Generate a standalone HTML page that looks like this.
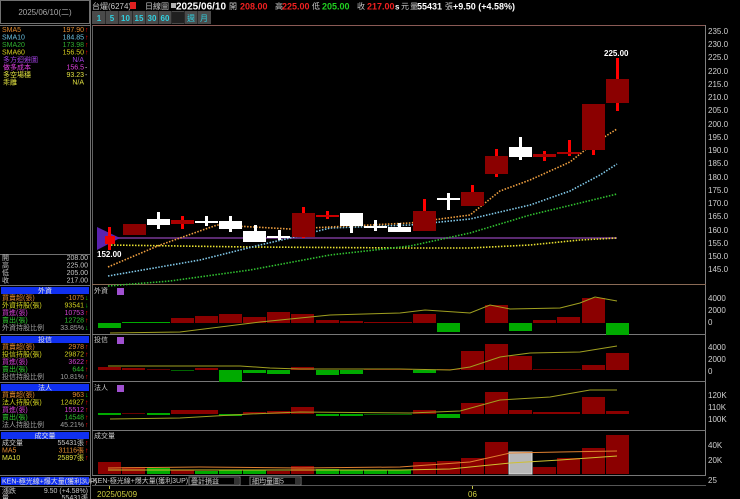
<!DOCTYPE html>
<html><head><meta charset="utf-8"><style>
html,body{margin:0;padding:0;background:#000;width:740px;height:499px;overflow:hidden}
svg{display:block;font-family:"Liberation Sans","Noto Sans CJK TC",sans-serif}
.s{font-size:7px}
</style></head><body>
<svg width="740" height="499" viewBox="0 0 740 499" xmlns="http://www.w3.org/2000/svg">
<rect width="740" height="499" fill="#000"/>
<!-- Left panel frame -->
<rect x="0.5" y="0.5" width="89" height="23" fill="#000" stroke="#707070"/>
<text x="45" y="15" fill="#a8a8a8" font-size="8" text-anchor="middle">2025/06/10(二)</text>
<line x1="90.5" y1="0" x2="90.5" y2="499" stroke="#707070"/>
<line x1="0" y1="25.5" x2="90" y2="25.5" stroke="#707070"/>
<g class="s">
<text x="2" y="32" fill="#e08a30">SMA5</text><text x="84" y="32" fill="#e08a30" text-anchor="end">197.90</text><text x="85" y="32" fill="#f00">↑</text>
<text x="2" y="39.5" fill="#6ac0e0">SMA10</text><text x="84" y="39.5" fill="#6ac0e0" text-anchor="end">184.85</text><text x="85" y="39.5" fill="#f00">↑</text>
<text x="2" y="47" fill="#30b030">SMA20</text><text x="84" y="47" fill="#30b030" text-anchor="end">173.98</text><text x="85" y="47" fill="#f00">↑</text>
<text x="2" y="54.5" fill="#d8d020">SMA60</text><text x="84" y="54.5" fill="#d8d020" text-anchor="end">156.50</text><text x="85" y="54.5" fill="#f00">↑</text>
<text x="3" y="62" fill="#a040e0">多方迴避圖</text><text x="84" y="62" fill="#a040e0" text-anchor="end">N/A</text>
<text x="3" y="69.5" fill="#e040e0">做多成本</text><text x="84" y="69.5" fill="#e040e0" text-anchor="end">156.5</text><text x="85" y="69.5" fill="#ccc">-</text>
<text x="3" y="77" fill="#e0e040">多空場穩</text><text x="84" y="77" fill="#e0e040" text-anchor="end">93.23</text><text x="85" y="77" fill="#ccc">-</text>
<text x="3" y="84.5" fill="#e0e040">乖離</text><text x="84" y="84.5" fill="#e0e040" text-anchor="end">N/A</text>
</g>
<line x1="0" y1="254.5" x2="90" y2="254.5" stroke="#707070"/>
<g class="s" fill="#c8c8c8">
<text x="2" y="260">開</text><text x="88" y="260" text-anchor="end">208.00</text>
<text x="2" y="267.5">高</text><text x="88" y="267.5" text-anchor="end">225.00</text>
<text x="2" y="275">低</text><text x="88" y="275" text-anchor="end">205.00</text>
<text x="2" y="282.5">收</text><text x="88" y="282.5" text-anchor="end">217.00</text>
</g>
<!-- section headers -->
<g class="s">
<line x1="0" y1="285.5" x2="90" y2="285.5" stroke="#707070"/>
<rect x="1" y="287" width="88" height="7" fill="#1030f0"/><text x="45" y="293" fill="#e0e0e0" text-anchor="middle">外資</text>
<text x="2" y="300" fill="#e08a30">買賣超(張)</text><text x="84" y="300" fill="#e08a30" text-anchor="end">-1075</text><text x="85" y="300" fill="#0c0">↓</text>
<text x="2" y="307.5" fill="#d0d020">外資持股(張)</text><text x="84" y="307.5" fill="#d0d020" text-anchor="end">93541</text><text x="85" y="307.5" fill="#0c0">↓</text>
<text x="2" y="315" fill="#d040d0">買進(張)</text><text x="84" y="315" fill="#d040d0" text-anchor="end">10753</text><text x="85" y="315" fill="#f00">↑</text>
<text x="2" y="322.5" fill="#30c030">賣出(張)</text><text x="84" y="322.5" fill="#30c030" text-anchor="end">12728</text><text x="85" y="322.5" fill="#f00">↑</text>
<text x="2" y="330" fill="#a0a0a0">外資持股比例</text><text x="84" y="330" fill="#a0a0a0" text-anchor="end">33.85%</text><text x="85" y="330" fill="#0c0">↓</text>
<line x1="0" y1="334.5" x2="90" y2="334.5" stroke="#707070"/>
<rect x="1" y="336" width="88" height="7" fill="#1030f0"/><text x="45" y="342" fill="#e0e0e0" text-anchor="middle">投信</text>
<text x="2" y="349" fill="#e08a30">買賣超(張)</text><text x="84" y="349" fill="#e08a30" text-anchor="end">2978</text><text x="85" y="349" fill="#f00">↑</text>
<text x="2" y="356.5" fill="#d0d020">投信持股(張)</text><text x="84" y="356.5" fill="#d0d020" text-anchor="end">29872</text><text x="85" y="356.5" fill="#f00">↑</text>
<text x="2" y="364" fill="#d040d0">買進(張)</text><text x="84" y="364" fill="#d040d0" text-anchor="end">3622</text><text x="85" y="364" fill="#f00">↑</text>
<text x="2" y="371.5" fill="#30c030">賣出(張)</text><text x="84" y="371.5" fill="#30c030" text-anchor="end">644</text><text x="85" y="371.5" fill="#f00">↑</text>
<text x="2" y="379" fill="#a0a0a0">投信持股比例</text><text x="84" y="379" fill="#a0a0a0" text-anchor="end">10.81%</text><text x="85" y="379" fill="#f00">↑</text>
<line x1="0" y1="382.5" x2="90" y2="382.5" stroke="#707070"/>
<rect x="1" y="384" width="88" height="7" fill="#1030f0"/><text x="45" y="390" fill="#e0e0e0" text-anchor="middle">法人</text>
<text x="2" y="397" fill="#e08a30">買賣超(張)</text><text x="84" y="397" fill="#e08a30" text-anchor="end">963</text><text x="85" y="397" fill="#0c0">↓</text>
<text x="2" y="404.5" fill="#d0d020">法人持股(張)</text><text x="84" y="404.5" fill="#d0d020" text-anchor="end">124927</text><text x="85" y="404.5" fill="#f00">↑</text>
<text x="2" y="412" fill="#d040d0">買進(張)</text><text x="84" y="412" fill="#d040d0" text-anchor="end">15512</text><text x="85" y="412" fill="#f00">↑</text>
<text x="2" y="419.5" fill="#30c030">賣出(張)</text><text x="84" y="419.5" fill="#30c030" text-anchor="end">14548</text><text x="85" y="419.5" fill="#f00">↑</text>
<text x="2" y="427" fill="#a0a0a0">法人持股比例</text><text x="84" y="427" fill="#a0a0a0" text-anchor="end">45.21%</text><text x="85" y="427" fill="#f00">↑</text>
<line x1="0" y1="430.5" x2="90" y2="430.5" stroke="#707070"/>
<rect x="1" y="432" width="88" height="7" fill="#1030f0"/><text x="45" y="438" fill="#e0e0e0" text-anchor="middle">成交量</text>
<text x="2" y="445" fill="#c8c8c8">成交量</text><text x="84" y="445" fill="#c8c8c8" text-anchor="end">55431張</text><text x="85" y="445" fill="#f00">↑</text>
<text x="2" y="452.5" fill="#e08a30">MA5</text><text x="84" y="452.5" fill="#e08a30" text-anchor="end">31116張</text><text x="85" y="452.5" fill="#f00">↑</text>
<text x="2" y="460" fill="#e0e040">MA10</text><text x="84" y="460" fill="#e0e040" text-anchor="end">25897張</text><text x="85" y="460" fill="#f00">↑</text>
<line x1="0" y1="475.5" x2="90" y2="475.5" stroke="#707070"/>
<rect x="1" y="477" width="88" height="8" fill="#1030f0"/><text x="2" y="483.5" fill="#e0e0e0">KEN-極光線+爆大量(獲利3UP)</text>
<line x1="0" y1="486.5" x2="90" y2="486.5" stroke="#707070"/>
<text x="2" y="493" fill="#c8c8c8">漲跌</text><text x="88" y="493" fill="#c8c8c8" text-anchor="end">9.50 (+4.58%)</text>
<text x="2" y="500" fill="#c8c8c8">量</text><text x="88" y="500" fill="#c8c8c8" text-anchor="end">55431張</text>
</g>

<!-- Top header -->
<g font-size="8" fill="#c8c8c8">
<text x="92" y="9">台燿(6274)</text>
<rect x="130" y="2" width="6" height="7" fill="#e02020"/>
<text x="145" y="9">日線圖</text>
<rect x="171" y="3" width="5" height="5" fill="#b0b0b0"/>
<text x="176" y="9.5" font-size="10" font-weight="bold" fill="#fff">2025/06/10</text>
<text x="229" y="9">開</text><text x="240" y="9.5" font-size="9" font-weight="bold" fill="#f02020">208.00</text>
<text x="275" y="9">高</text><text x="282" y="9.5" font-size="9" font-weight="bold" fill="#f02020">225.00</text>
<text x="312" y="9">低</text><text x="322" y="9.5" font-size="9" font-weight="bold" fill="#20d020">205.00</text>
<text x="357" y="9">收</text><text x="367" y="9.5" font-size="9" font-weight="bold" fill="#f02020">217.00</text>
<text x="395" y="9.5" font-size="8" font-weight="bold" fill="#fff">s</text><text x="401" y="9">元</text>
<text x="410" y="9">量</text><text x="417" y="9.5" font-size="9" font-weight="bold" fill="#fff">55431</text>
<text x="445" y="9">張</text><text x="453" y="9.5" font-size="9" font-weight="bold" fill="#fff">+9.50 (+4.58%)</text>
</g>
<!-- buttons -->
<g font-size="8" font-weight="bold" fill="#30d0e0" text-anchor="middle">
<rect x="92" y="11" width="119" height="13" fill="#4a4a4a"/>
<rect x="172" y="12" width="12" height="11" fill="#202020"/>
<g stroke="#2a2a2a"><line x1="105.5" y1="11" x2="105.5" y2="24"/><line x1="118.5" y1="11" x2="118.5" y2="24"/><line x1="132.5" y1="11" x2="132.5" y2="24"/><line x1="145.5" y1="11" x2="145.5" y2="24"/><line x1="158.5" y1="11" x2="158.5" y2="24"/><line x1="171.5" y1="11" x2="171.5" y2="24"/><line x1="184.5" y1="11" x2="184.5" y2="24"/><line x1="197.5" y1="11" x2="197.5" y2="24"/></g>
<text x="99" y="21">1</text><text x="112" y="21">5</text><text x="125.5" y="21">10</text><text x="139" y="21">15</text><text x="152" y="21">30</text><text x="165" y="21">60</text>
<text x="191" y="21" font-weight="normal">週</text><text x="204" y="21" font-weight="normal">月</text>
</g>

<!-- chart frame -->
<line x1="92" y1="25.5" x2="706" y2="25.5" stroke="#8a5a55"/>
<line x1="92.5" y1="25" x2="92.5" y2="476" stroke="#606060"/>
<line x1="705.5" y1="25" x2="705.5" y2="476" stroke="#808080"/>
<g stroke="#777">
<line x1="92" y1="284.5" x2="706" y2="284.5" stroke="#8a6a55"/>
<line x1="92" y1="334.5" x2="706" y2="334.5"/>
<line x1="92" y1="381.5" x2="706" y2="381.5"/>
<line x1="92" y1="430.5" x2="706" y2="430.5"/>
<line x1="92" y1="475.5" x2="706" y2="475.5"/>
<line x1="92" y1="485.5" x2="706" y2="485.5" stroke="#555"/>
</g>
<!-- price axis -->
<g font-size="8" fill="#d0d0d0">
<text x="708" y="34">235.0</text><text x="708" y="47">230.0</text><text x="708" y="60">225.0</text><text x="708" y="74">220.0</text><text x="708" y="87">215.0</text><text x="708" y="100">210.0</text><text x="708" y="113">205.0</text><text x="708" y="127">200.0</text><text x="708" y="140">195.0</text><text x="708" y="153">190.0</text><text x="708" y="166">185.0</text><text x="708" y="180">180.0</text><text x="708" y="193">175.0</text><text x="708" y="206">170.0</text><text x="708" y="219">165.0</text><text x="708" y="233">160.0</text><text x="708" y="246">155.0</text><text x="708" y="259">150.0</text><text x="708" y="272">145.0</text>
<text x="708" y="301">4000</text><text x="708" y="313">2000</text><text x="708" y="325">0</text>
<text x="708" y="350">4000</text><text x="708" y="362">2000</text><text x="708" y="374">0</text>
<text x="708" y="398">120K</text><text x="708" y="410">110K</text><text x="708" y="422">100K</text>
<text x="708" y="448">40K</text><text x="708" y="463">20K</text>
<text x="708" y="483">25</text>
</g>

<!-- purple line & triangle -->
<line x1="98" y1="238" x2="617" y2="238" stroke="#5a2a70" stroke-width="2"/>
<polygon points="97,227 97,250 120,238" fill="#5a22b0"/>

<!-- MAs -->
<g fill="none" stroke-width="1.6" stroke-dasharray="1.5 1.5">
<polyline stroke="#e8e030" points="108,245 250,247 410,248 470,248 530,245 580,240 617,238"/>
<polyline stroke="#30c030" points="108,286 170,281 250,270 330,255 410,246 470,233 530,215 580,203 617,194"/>
<polyline stroke="#80c8e8" points="108,276 200,260 260,245 290,238 330,228 410,225 470,219 530,205 570,191 600,175 617,164"/>
<polyline stroke="#f0a040" points="108,267 160,245 217,225 290,229 410,223 470,215 500,191 530,180 570,162 590,146 617,129"/>
</g>

<!-- candles -->
<g>
<rect x="108" y="227" width="3" height="23" fill="#f00"/><rect x="105" y="236" width="10" height="8" fill="#e00"/>
<rect x="123" y="224" width="23" height="11" fill="#8b0000"/>
<rect x="157" y="212" width="3" height="17" fill="#fff"/><rect x="147" y="219" width="23" height="6" fill="#fff"/>
<rect x="181" y="216" width="3" height="13" fill="#f00"/><rect x="171" y="220" width="23" height="4" fill="#a00"/>
<rect x="205" y="216" width="3" height="10" fill="#fff"/><rect x="195" y="221" width="23" height="2" fill="#fff"/>
<rect x="229" y="216" width="3" height="16" fill="#fff"/><rect x="219" y="221" width="23" height="8" fill="#fff"/>
<rect x="254" y="225" width="3" height="17" fill="#fff"/><rect x="243" y="231" width="23" height="11" fill="#fff"/>
<rect x="278" y="230" width="3" height="10" fill="#fff"/><rect x="267" y="236" width="23" height="2" fill="#fff"/>
<rect x="302" y="207" width="3" height="31" fill="#f00"/><rect x="292" y="213" width="23" height="24" fill="#8b0000"/>
<rect x="326" y="211" width="3" height="8" fill="#f00"/><rect x="316" y="215" width="23" height="2" fill="#c00"/>
<rect x="350" y="213" width="3" height="20" fill="#fff"/><rect x="340" y="213" width="23" height="13" fill="#fff"/>
<rect x="374" y="220" width="3" height="11" fill="#fff"/><rect x="364" y="226" width="23" height="2" fill="#fff"/>
<rect x="398" y="223" width="3" height="9" fill="#fff"/><rect x="388" y="227" width="23" height="5" fill="#fff"/>
<rect x="423" y="199" width="3" height="32" fill="#f00"/><rect x="413" y="211" width="23" height="20" fill="#8b0000"/>
<rect x="447" y="193" width="3" height="17" fill="#fff"/><rect x="437" y="198" width="23" height="2" fill="#fff"/>
<rect x="471" y="185" width="3" height="21" fill="#f00"/><rect x="461" y="192" width="23" height="14" fill="#8b0000"/>
<rect x="495" y="149" width="3" height="28" fill="#f00"/><rect x="485" y="156" width="23" height="18" fill="#8b0000"/>
<rect x="519" y="137" width="3" height="23" fill="#fff"/><rect x="509" y="147" width="23" height="10" fill="#fff"/>
<rect x="543" y="151" width="3" height="10" fill="#f00"/><rect x="533" y="154" width="23" height="3" fill="#a00"/>
<rect x="568" y="140" width="3" height="16" fill="#f00"/><rect x="557" y="152" width="23" height="2" fill="#a00"/>
<rect x="592" y="120" width="3" height="35" fill="#f00"/><rect x="582" y="104" width="23" height="46" fill="#8b0000"/>
<rect x="616" y="58" width="3" height="53" fill="#f00"/><rect x="606" y="79" width="23" height="24" fill="#8b0000"/>
</g>
<text x="97" y="257" font-size="8" font-weight="bold" fill="#fff">152.00</text>
<text x="604" y="56" font-size="8" font-weight="bold" fill="#fff">225.00</text>

<!-- panel labels -->
<g font-size="7" fill="#c8c8c8">
<text x="94" y="293">外資</text><rect x="117" y="288" width="7" height="7" fill="#a050d0"/>
<text x="94" y="342">投信</text><rect x="117" y="337" width="7" height="7" fill="#a050d0"/>
<text x="94" y="390">法人</text><rect x="117" y="385" width="7" height="7" fill="#a050d0"/>
<text x="94" y="438">成交量</text>
</g>

<!-- panel 1 -->
<g>
<rect x="98" y="323" width="23" height="5" fill="#0a0"/><rect x="122" y="322" width="48" height="1" fill="#0a0"/>
<rect x="171" y="318" width="23" height="5" fill="#8b0000"/><rect x="195" y="316" width="23" height="7" fill="#8b0000"/><rect x="219" y="314" width="23" height="9" fill="#8b0000"/><rect x="243" y="317" width="23" height="6" fill="#8b0000"/><rect x="267" y="312" width="23" height="11" fill="#8b0000"/><rect x="291" y="314" width="23" height="9" fill="#8b0000"/><rect x="316" y="320" width="23" height="3" fill="#8b0000"/><rect x="340" y="321" width="23" height="2" fill="#8b0000"/><rect x="364" y="322" width="48" height="1" fill="#8b0000"/>
<rect x="413" y="314" width="23" height="9" fill="#8b0000"/><rect x="437" y="323" width="23" height="9" fill="#0a0"/><rect x="485" y="305" width="23" height="18" fill="#8b0000"/><rect x="509" y="323" width="23" height="8" fill="#0a0"/><rect x="533" y="320" width="23" height="3" fill="#8b0000"/><rect x="557" y="317" width="23" height="6" fill="#8b0000"/><rect x="582" y="298" width="23" height="25" fill="#8b0000"/><rect x="606" y="323" width="23" height="12" fill="#0a0"/>
<polyline fill="none" stroke="#a0a020" points="110,333 180,332 260,322 330,315 400,313 425,310 470,313 490,305 510,309 560,308 580,303 595,297 617,301"/>
</g>
<!-- panel 2 -->
<g>
<rect x="98" y="367" width="23" height="3" fill="#8b0000"/><rect x="122" y="368" width="23" height="2" fill="#8b0000"/><rect x="147" y="369" width="23" height="1" fill="#600"/><rect x="171" y="370" width="23" height="1" fill="#060"/><rect x="195" y="368" width="23" height="2" fill="#8b0000"/>
<rect x="219" y="370" width="23" height="12" fill="#0a0"/><rect x="243" y="370" width="23" height="3" fill="#0a0"/><rect x="267" y="370" width="23" height="4" fill="#0a0"/><rect x="291" y="367" width="23" height="3" fill="#8b0000"/><rect x="316" y="370" width="23" height="5" fill="#0a0"/><rect x="340" y="370" width="23" height="4" fill="#0a0"/><rect x="364" y="369" width="48" height="1" fill="#600"/>
<rect x="413" y="370" width="23" height="3" fill="#0a0"/><rect x="437" y="369" width="23" height="1" fill="#600"/><rect x="461" y="351" width="23" height="19" fill="#8b0000"/><rect x="485" y="344" width="23" height="26" fill="#8b0000"/><rect x="509" y="356" width="23" height="14" fill="#8b0000"/><rect x="533" y="369" width="48" height="1" fill="#600"/><rect x="582" y="365" width="23" height="5" fill="#8b0000"/><rect x="606" y="353" width="23" height="17" fill="#8b0000"/>
<polyline fill="none" stroke="#a0a020" points="108,366 200,366 240,366 270,368 300,369 400,369 450,370 470,367 500,357 530,353 580,352 617,346"/>
</g>
<!-- panel 3 -->
<g>
<rect x="98" y="413" width="23" height="2" fill="#0a0"/><rect x="122" y="413" width="23" height="1" fill="#600"/><rect x="147" y="413" width="23" height="2" fill="#0a0"/>
<rect x="171" y="410" width="47" height="4" fill="#8b0000"/><rect x="219" y="414" width="23" height="2" fill="#0a0"/><rect x="243" y="412" width="23" height="2" fill="#8b0000"/><rect x="267" y="411" width="23" height="3" fill="#8b0000"/><rect x="291" y="407" width="23" height="7" fill="#8b0000"/><rect x="316" y="414" width="23" height="2" fill="#0a0"/><rect x="340" y="414" width="23" height="2" fill="#0a0"/><rect x="364" y="414" width="48" height="1" fill="#060"/>
<rect x="413" y="410" width="23" height="4" fill="#8b0000"/><rect x="437" y="414" width="23" height="4" fill="#0a0"/><rect x="461" y="403" width="23" height="11" fill="#8b0000"/><rect x="485" y="392" width="23" height="22" fill="#8b0000"/><rect x="509" y="410" width="23" height="4" fill="#8b0000"/><rect x="533" y="412" width="47" height="2" fill="#8b0000"/><rect x="582" y="397" width="23" height="17" fill="#8b0000"/><rect x="606" y="411" width="23" height="3" fill="#8b0000"/>
<polyline fill="none" stroke="#a0a020" points="110,419 180,418 250,414 300,412 410,413 460,411 500,400 550,397 590,390 617,390"/>
</g>
<!-- panel 4 -->
<g>
<rect x="98" y="462" width="23" height="12" fill="#8b0000"/><rect x="122" y="467" width="23" height="7" fill="#8b0000"/><rect x="147" y="468" width="23" height="6" fill="#0a0"/><rect x="171" y="470" width="23" height="4" fill="#8b0000"/><rect x="195" y="471" width="23" height="3" fill="#0a0"/><rect x="219" y="470" width="23" height="4" fill="#0a0"/><rect x="243" y="470" width="23" height="4" fill="#0a0"/><rect x="267" y="471" width="23" height="3" fill="#8b0000"/><rect x="291" y="466" width="23" height="8" fill="#8b0000"/><rect x="316" y="469" width="23" height="5" fill="#0a0"/><rect x="340" y="470" width="23" height="4" fill="#0a0"/><rect x="364" y="470" width="23" height="4" fill="#0a0"/><rect x="388" y="470" width="23" height="4" fill="#0a0"/>
<rect x="413" y="462" width="23" height="12" fill="#8b0000"/><rect x="437" y="461" width="23" height="13" fill="#8b0000"/><rect x="461" y="458" width="23" height="16" fill="#8b0000"/><rect x="485" y="442" width="23" height="32" fill="#8b0000"/><rect x="509" y="452" width="23" height="22" fill="#b8b8b8" stroke="#e0e0e0"/><rect x="533" y="467" width="23" height="7" fill="#8b0000"/><rect x="557" y="458" width="23" height="16" fill="#8b0000"/><rect x="582" y="448" width="23" height="26" fill="#8b0000"/><rect x="606" y="435" width="23" height="39" fill="#8b0000"/>
<polyline fill="none" stroke="#e08030" points="108,468 200,467 300,468 400,467 470,462 510,453 560,452 617,451"/>
<polyline fill="none" stroke="#d0c030" points="108,470 250,470 400,470 450,469 510,463 560,460 617,456"/>
</g>

<!-- bottom controls -->
<g font-size="7" fill="#c8c8c8">
<text x="93" y="483">KEN-極光線+爆大量(獲利3UP)</text>
<rect x="189" y="477" width="51" height="8" fill="#000" stroke="#777"/><text x="191" y="483.5">疊計損益</text><rect x="234" y="478" width="5" height="6" fill="#333"/>
<rect x="250" y="477" width="51" height="8" fill="#000" stroke="#777"/><text x="252" y="483.5">細均量圖5</text><rect x="295" y="478" width="5" height="6" fill="#333"/>
</g>
<line x1="109.5" y1="486" x2="109.5" y2="489" stroke="#c0c040"/>
<line x1="472.5" y1="486" x2="472.5" y2="489" stroke="#c0c040"/>
<text x="97" y="497" font-size="8" fill="#d0d040">2025/05/09</text>
<text x="468" y="497" font-size="8" fill="#d0d040">06</text>
</svg>
</body></html>
